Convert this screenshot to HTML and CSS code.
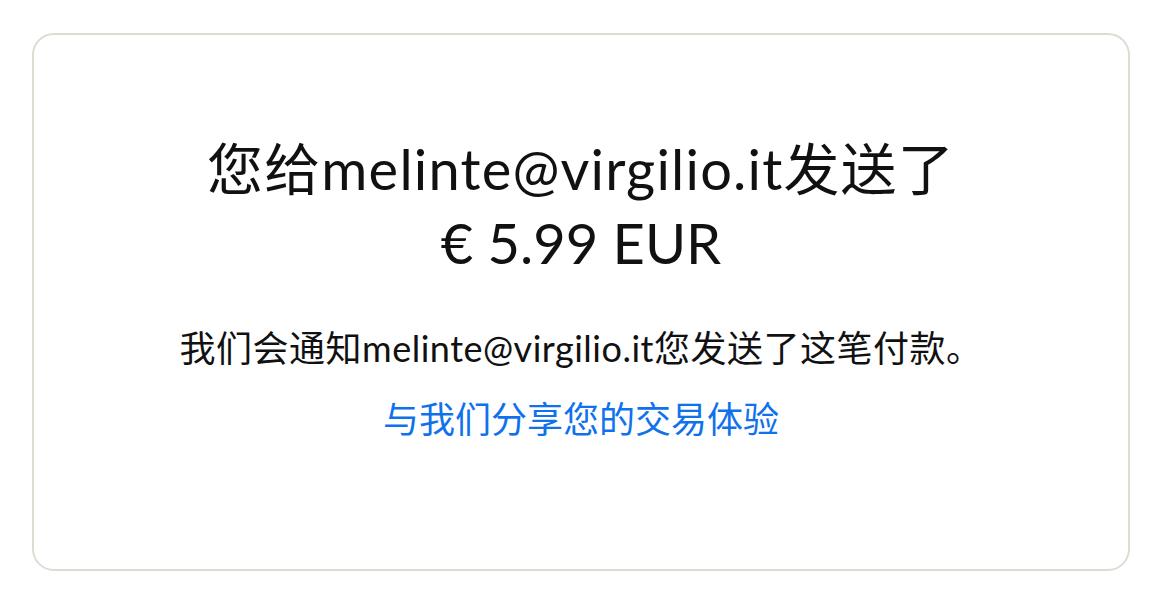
FILE: index.html
```html
<!DOCTYPE html>
<html lang="zh-CN">
<head>
  <meta charset="UTF-8" />
  <meta name="viewport" content="width=device-width, initial-scale=1.0" />
  <title>付款已发送</title>
  <link rel="stylesheet" href="styles.css">
</head>
<body>
  <div class="card">
    <h1 class="title">
      <span class="line wide">您给melinte@virgilio.it发送了</span>
      <span class="line">€ 5.99 EUR</span>
    </h1>
    <p class="notice">我们会通知melinte@virgilio.it您发送了这笔付款。</p>
    <a class="feedback" href="#">与我们分享您的交易体验</a>
  </div>
</body>
</html>
```

FILE: styles.css
```css
body {
  margin: 0;
  padding: 33px 30px 30px 32px;
  background-color: #fff;
  color: #111;
  font-family: Lato, "Noto Sans CJK SC", sans-serif;
}

.card {
  height: 538px;
  box-sizing: border-box;
  border: 2px solid #dedbd3;
  border-radius: 22px;
  display: flex;
  flex-direction: column;
  align-items: center;
  padding-top: 97px;
  text-align: center;
}

.title {
  margin: 0;
  font-size: 56px;
  font-weight: 400;
  line-height: 74px;
}

.line {
  display: block;
}

.wide {
  letter-spacing: 1.2px;
}

.notice {
  margin: 44px 0 0;
  font-size: 36px;
  line-height: 48px;
  letter-spacing: 0.5px;
}

.feedback {
  margin-top: 23px;
  font-size: 36px;
  line-height: 48px;
  color: #1072eb;
  text-decoration: none;
}
```
